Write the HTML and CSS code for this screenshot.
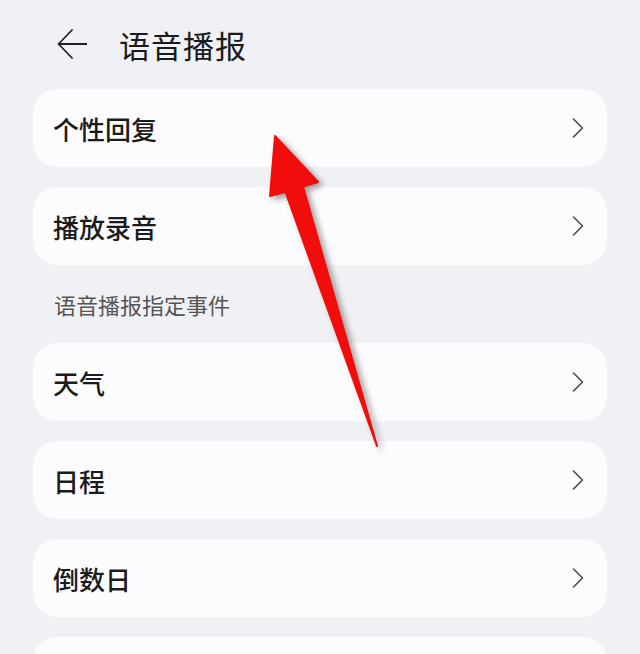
FILE: index.html
```html
<!DOCTYPE html>
<html lang="zh-CN">
  <head>
    <meta charset="UTF-8" />
    <meta name="viewport" content="width=device-width, initial-scale=1.0" />
    <title>语音播报</title>
    <link rel="stylesheet" href="styles.css">
  </head>
  <body>
    <div class="page">
      <div class="header">
        <svg class="back" viewBox="0 0 30 30" width="30" height="30">
          <path d="M15 1 L1.5 15 L15 29 M1.5 15 H30" fill="none" stroke="#222" stroke-width="1.8" stroke-linecap="round" stroke-linejoin="round" />
        </svg>
        <h1>语音播报</h1>
      </div>

      <div class="list">
        <div class="item"><span>个性回复</span><svg class="chev" viewBox="0 0 12 20"><polyline points="1.5,1 10.5,10 1.5,19" /></svg></div>
        <div class="item"><span>播放录音</span><svg class="chev" viewBox="0 0 12 20"><polyline points="1.5,1 10.5,10 1.5,19" /></svg></div>
      </div>

      <div class="section">语音播报指定事件</div>

      <div class="list">
        <div class="item"><span>天气</span><svg class="chev" viewBox="0 0 12 20"><polyline points="1.5,1 10.5,10 1.5,19" /></svg></div>
        <div class="item"><span>日程</span><svg class="chev" viewBox="0 0 12 20"><polyline points="1.5,1 10.5,10 1.5,19" /></svg></div>
        <div class="item"><span>倒数日</span><svg class="chev" viewBox="0 0 12 20"><polyline points="1.5,1 10.5,10 1.5,19" /></svg></div>
        <div class="item"></div>
      </div>

      <!-- red pointer drawn over the list -->
      <svg class="pointer" viewBox="0 0 640 654" width="640" height="654">
        <path d="M275 136 L318 182 L303 186.5 L377 446 L285.5 192 L270 196 Z" />
      </svg>
    </div>
  </body>
</html>
```

FILE: styles.css
```css
body {
  margin: 0;
  padding: 0;
  background-color: #f0f1f5;
  font-family: "Noto Sans CJK SC", "Noto Sans", sans-serif;
  color: #1b1b1b;
  overflow: hidden;
}
.page {
  position: relative;
  width: 640px;
  height: 654px;
  overflow: hidden;
}
.header {
  display: flex;
  align-items: center;
  height: 89px;
  padding-left: 57px;
  gap: 32px;
}
.back {
  display: block;
  margin-top: -2px;
}
h1 {
  margin: 0;
  font-size: 31px;
  font-weight: 400;
  letter-spacing: 1px;
  color: #1a1a1a;
}
.list {
  display: flex;
  flex-direction: column;
  gap: 20px;
  padding: 0 33px;
}
.item {
  display: flex;
  align-items: center;
  justify-content: space-between;
  height: 78px;
  padding: 0 23px 0 20px;
  background: #fcfcfe;
  border-radius: 24px;
  font-size: 26px;
  font-weight: 500;
}
.chev {
  width: 12px;
  height: 20px;
}
.chev polyline {
  fill: none;
  stroke: #4a4a4a;
  stroke-width: 1.6;
  stroke-linecap: round;
  stroke-linejoin: round;
}
.section {
  display: flex;
  align-items: center;
  height: 78px;
  padding-left: 54px;
  font-size: 22px;
  color: #555;
}
.pointer {
  position: absolute;
  top: 0;
  left: 0;
  pointer-events: none;
  filter: drop-shadow(4px 3px 3px rgba(60, 40, 40, 0.45));
}
.pointer path {
  fill: #f20d0d;
  stroke: #f20d0d;
  stroke-width: 2;
  stroke-linejoin: round;
}
```
